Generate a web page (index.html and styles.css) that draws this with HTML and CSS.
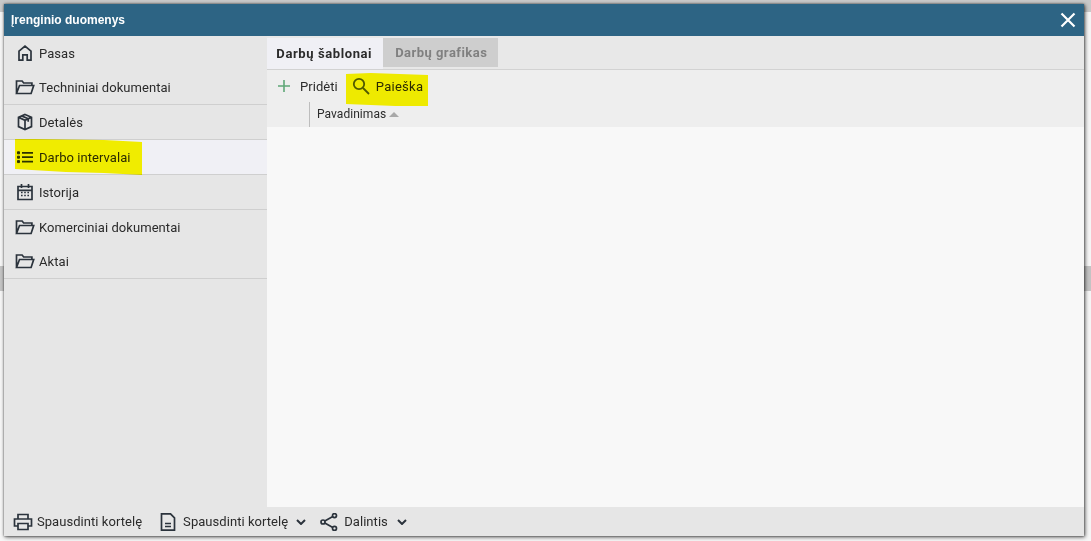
FILE: index.html
```html
<!DOCTYPE html>
<html lang="lt">
<head>
<meta charset="utf-8">
<title>Įrenginio duomenys</title>
<link rel="stylesheet" href="styles.css">
</head>
<body>
<div class="backdrop-band"></div>
<div class="window">
  <header class="titlebar">
    <span class="title">Įrenginio duomenys</span>
    <svg class="close" viewBox="0 0 16 16"><path d="M1.5 1.5l13 13M14.5 1.5l-13 13"/></svg>
  </header>
  <div class="main">
    <nav class="sidebar">
      <a class="item"><svg class="ico" viewBox="0 0 18 18"><path d="M3 16.2V7.2L9 2l6 5.2v9h-3.8v-5.4H6.8v5.4z"/></svg>Pasas</a>
      <a class="item sep"><svg class="ico wide" viewBox="0 0 20 18"><path d="M1.5 15.5V3h5.6l1.6 2h8.2v2.5M1.5 15.5L4.5 7.5h14.2l-2.6 8z"/></svg>Techniniai dokumentai</a>
      <a class="item sep"><svg class="ico" viewBox="0 0 18 18"><path d="M9 1.5l6.5 2.7v9.4L9 16.5l-6.5-2.9V4.2zM2.7 4.4L9 7.2l6.3-2.8M9 7.2v9.1M5.6 2.9l6.6 2.9v3"/></svg>Detalės</a>
      <a class="item sep active"><svg class="ico" viewBox="0 0 18 18"><path class="thick" d="M1.5 3.8h2v2h-2zM1.5 8.2h2v2h-2zM1.5 12.6h2v2h-2z"/><path d="M6 4.8h11M6 9.2h11M6 13.6h11"/></svg>Darbo intervalai</a>
      <a class="item sep"><svg class="ico" viewBox="0 0 18 18"><path d="M2 3.5h14v13H2zM2 7.3h14M5.5 1v4M12.5 1v4"/><path class="dots" d="M5 9.5h1.6M8.2 9.5h1.6M11.4 9.5H13M5 12.5h1.6M8.2 12.5h1.6M11.4 12.5H13"/></svg>Istorija</a>
      <a class="item"><svg class="ico wide" viewBox="0 0 20 18"><path d="M1.5 15.5V3h5.6l1.6 2h8.2v2.5M1.5 15.5L4.5 7.5h14.2l-2.6 8z"/></svg>Komerciniai dokumentai</a>
      <a class="item sep"><svg class="ico wide" viewBox="0 0 20 18"><path d="M1.5 15.5V3h5.6l1.6 2h8.2v2.5M1.5 15.5L4.5 7.5h14.2l-2.6 8z"/></svg>Aktai</a>
    </nav>
    <section class="content">
      <div class="tabs">
        <span class="tab on">Darbų šablonai</span>
        <span class="tab off">Darbų grafikas</span>
      </div>
      <div class="toolbar">
        <span class="tool add"><svg class="plus" viewBox="0 0 12 12"><path d="M6 0v12M0 6h12"/></svg>Pridėti</span>
        <span class="tool search"><svg class="glass" viewBox="0 0 18 18"><circle cx="7" cy="7" r="5.2"/><path d="M11 11l6 6"/></svg>Paieška</span>
      </div>
      <div class="thead">
        <div class="th-empty"></div>
        <div class="th">Pavadinimas<i class="sort"></i></div>
      </div>
      <div class="tbody"></div>
    </section>
  </div>
  <footer class="footer">
    <span class="fbtn first"><svg class="ico wide" viewBox="0 0 20 18"><path d="M5 6V1.5h10V6M5 13H1.5V6h17v7H15M5 10.5h10v6H5z"/></svg>Spausdinti kortelę</span>
    <span class="fbtn second"><svg class="ico" viewBox="0 0 18 18"><path d="M2.5 .8h9l4 4v12.4h-13zM6 10.5h6M6 13.5h6"/></svg>Spausdinti kortelę<svg class="chev" viewBox="0 0 10 6"><path d="M1 1l4 4 4-4"/></svg></span>
    <span class="fbtn third"><svg class="ico" viewBox="0 0 18 18"><circle cx="3" cy="9" r="2"/><circle cx="14.5" cy="2.6" r="2"/><circle cx="14.5" cy="15.4" r="2"/><path d="M4.8 8l8-4.4M4.8 10l8 4.4"/></svg>Dalintis<svg class="chev" viewBox="0 0 10 6"><path d="M1 1l4 4 4-4"/></svg></span>
  </footer>
  <div class="mark mark-nav"></div>
  <div class="mark mark-search"></div>
</div>
</body>
</html>
```
FILE: styles.css
```css
* { box-sizing: border-box; }
html, body { height: 100%; }
body {
  margin: 0;
  padding: 4px 7px 5px 4px;
  background: linear-gradient(#c9c9c9 0 12px, #f6f6f6 12px);
  font-family: "Roboto", "Liberation Sans", sans-serif;
  font-size: 13px;
  letter-spacing: .06px;
  color: #2b2b2b;
  overflow: hidden;
  position: relative;
}
.backdrop-band {
  position: absolute;
  left: 0; right: 0; top: 266px;
  height: 25px;
  background: #c4c4c4;
}
.window {
  position: relative;
  height: 532px;
  display: flex;
  flex-direction: column;
  background: #f8f8f8;
  box-shadow: 1px 1px 4px rgba(0,0,0,.65), 0 0 2px rgba(0,0,0,.5);
}
.titlebar {
  height: 32px;
  flex: none;
  background: #2d6484;
  display: flex;
  align-items: center;
  justify-content: space-between;
  padding: 0 8px 0 7px;
  color: #fff;
}
.title { font: bold 12px "Liberation Sans", sans-serif; letter-spacing: 0; }
.close { width: 16px; height: 16px; fill: none; stroke: #fff; stroke-width: 2.2; }
.main { flex: 1; display: flex; min-height: 0; }
.sidebar { width: 263px; flex: none; background: #e6e6e6; }
.item {
  height: 34px;
  display: flex;
  align-items: center;
  padding-left: 12px;
  color: inherit;
}
.item.sep { height: 35px; border-bottom: 1px solid #cfcfcf; }
.item.active { background: #f0f0f5; }
.ico {
  width: 18px; height: 18px; flex: none;
  margin-right: 5px;
  fill: none; stroke: #2b333c; stroke-width: 1.7;
}
.ico.wide { width: 20px; margin-left: -1px; margin-right: 4px; }
.ico .thick { stroke-width: 1; fill: #2b333c; }
.ico .dots { stroke-width: 1.4; }
.content { flex: 1; display: flex; flex-direction: column; min-width: 0; }
.tabs {
  height: 34px;
  flex: none;
  display: flex;
  align-items: flex-start;
  padding-top: 2px;
  background: #e8e8e8;
  border-bottom: 1px solid #d2d2d2;
}
.tab {
  display: flex;
  align-items: center;
  justify-content: center;
  font-weight: 700;
  font-size: 13px;
  width: 115.5px;
  letter-spacing: .6px;
}
.tab.on { height: 31px; background: #f0f0f5; padding: 0 1px 1px 0; }
.tab.off { height: 29px; background: #cecece; color: #808080; letter-spacing: .47px; padding-left: 2px; }
.toolbar {
  height: 32px;
  flex: none;
  display: flex;
  align-items: center;
  background: #eeeeee;
  padding-left: 11px;
}
.tool { display: flex; align-items: center; }
.plus { width: 12px; height: 12px; fill: none; stroke: #5fa777; stroke-width: 1.6; margin-right: 10px; }
.search { margin-left: 14px; letter-spacing: .25px; }
.glass { width: 18px; height: 18px; fill: none; stroke: #4f5a10; stroke-width: 1.8; margin-right: 6px; }
.thead { height: 25px; flex: none; display: flex; background: #eeeeee; }
.th-empty { width: 43px; border-right: 1px solid #bdbdbd; }
.th { padding: 5px 0 0 7px; font-size: 12px; letter-spacing: .05px; display: flex; align-items: flex-start; height: 100%; line-height: 15px; }
.sort {
  width: 0; height: 0;
  margin: 5px 0 0 3px;
  border: 5px solid transparent;
  border-top: 0;
  border-bottom: 5px solid #a8a8a8;
}
.tbody { flex: 1; background: #f8f8f8; }
.footer {
  height: 29px;
  flex: none;
  background: #e6e6e6;
  display: flex;
  align-items: center;
  padding-left: 10px;
  letter-spacing: .05px;
}
.fbtn { display: flex; align-items: center; }
.second { margin-left: 17px; }
.third { margin-left: 14px; }
.chev { width: 10px; height: 6px; margin-left: 8px; fill: none; stroke: #2b333c; stroke-width: 2; }
.third .chev { margin-left: 9px; }
.second .ico { margin-right: 6px; }
.third .ico { margin-right: 6px; }
.mark {
  position: absolute;
  background: #fffb00;
  mix-blend-mode: multiply;
}
.mark-nav {
  left: 11px; top: 135px;
  width: 127px; height: 36px;
  clip-path: polygon(0 0, 15% 0, 70% 1px, 100% 3px, 100% 100%, 70% 34px, 40% 33px, 0 30px);
}
.mark-search {
  left: 342px; top: 69px;
  width: 82px; height: 33px;
  clip-path: polygon(0 1px, 30% 0, 100% 2px, 100% 100%, 60% 100%, 0 31px);
}
```
